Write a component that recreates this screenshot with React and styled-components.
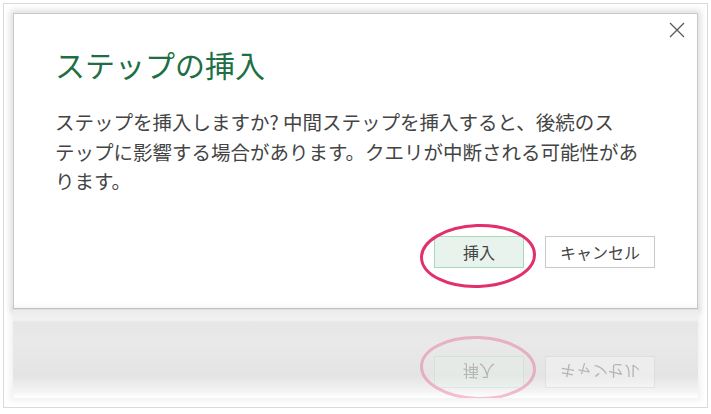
import React from "react";
import styled, { createGlobalStyle } from "styled-components";

const GlobalStyle = createGlobalStyle`
  html, body {
    margin: 0;
    padding: 0;
    background: #ffffff;
  }
  body {
    font-family: "Noto Sans CJK JP", "Noto Sans", sans-serif;
  }
`;

const Frame = styled.div`
  box-sizing: border-box;
  width: 705px;
  height: 405px;
  margin: 3px;
  padding: 9px;
  border: 1px solid #dadada;
  display: flex;
  flex-direction: column;
`;

const Dialog = styled.section`
  box-sizing: border-box;
  width: 685px;
  height: 297px;
  background: #ffffff;
  border: 1px solid #c9c9c9;
  box-shadow: 0 0 6px 3px rgba(0, 0, 0, 0.12);
  display: flex;
  flex-direction: column;
`;

const Header = styled.div`
  display: flex;
  justify-content: flex-end;
  align-items: flex-start;
  height: 30px;
  padding: 8px 12px 0 0;
  box-sizing: border-box;
`;

const CloseButton = styled.button`
  width: 16px;
  height: 16px;
  padding: 0;
  border: 0;
  background: transparent;
  display: flex;
  cursor: pointer;
`;

const Content = styled.div`
  padding: 0 42px 0 41px;
  display: flex;
  flex-direction: column;
`;

const Title = styled.h1`
  margin: 0;
  font-size: 30px;
  line-height: 40px;
  font-weight: 400;
  color: #1e6f43;
`;

const Message = styled.p`
  margin: 23px 0 0;
  font-size: 19.5px;
  line-height: 29.5px;
  color: #444444;
`;

const Footer = styled.div`
  display: flex;
  justify-content: flex-end;
  gap: 21px;
  margin-top: 40px;
`;

const Button = styled.button`
  box-sizing: border-box;
  height: 32px;
  min-width: 90px;
  padding: 0 14px;
  font-family: "Noto Sans CJK JP", sans-serif;
  font-size: 16px;
  color: #444444;
  background: ${p => (p.$primary ? "#e7f3ec" : "#ffffff")};
  border: 1px solid ${p => (p.$primary ? "#a9d8bd" : "#c8c8c8")};
  cursor: pointer;
`;

const Marked = styled.div`
  position: relative;
  display: flex;
`;

const Ring = styled.svg`
  position: absolute;
  left: -15px;
  top: -14px;
  width: 118px;
  height: 66px;
  pointer-events: none;
  overflow: visible;
`;

const Reflection = styled.div`
  box-sizing: border-box;
  width: 685px;
  height: 88px;
  margin-top: 1px;
  padding: 46px 43px 0 0;
  background: linear-gradient(
    to bottom,
    #ececec 0px,
    #f1f1f1 10px,
    #e6e6e6 12px,
    #e9e9e9 32px,
    #e4e4e4 66px,
    #f2f2f2 80px,
    #ffffff 88px
  );
  box-shadow: 0 0 6px 3px rgba(0, 0, 0, 0.06);
  overflow: hidden;
`;

const Mirror = styled.div`
  transform: scaleY(-1);
  opacity: 0.3;
`;

const MirrorRow = styled(Footer)`
  margin-top: 0;
`;

const CloseIcon = () => (
  <svg width="16" height="16" viewBox="0 0 16 16">
    <path d="M1 1 L15 15 M15 1 L1 15" stroke="#5a5a5a" strokeWidth="1.3" fill="none" />
  </svg>
);

const Actions = () => (
  <>
    <Marked>
      <Button $primary>挿入</Button>
      <Ring viewBox="0 0 118 66">
        <ellipse
          cx="59"
          cy="34"
          rx="56.5"
          ry="30.5"
          fill="none"
          stroke="#e2306c"
          strokeWidth="3"
          transform="rotate(-2 59 34)"
        />
      </Ring>
    </Marked>
    <Button>キャンセル</Button>
  </>
);

export default function App() {
  return (
    <>
      <GlobalStyle />
      <Frame>
        <Dialog>
          <Header>
            <CloseButton aria-label="閉じる">
              <CloseIcon />
            </CloseButton>
          </Header>
          <Content>
            <Title>ステップの挿入</Title>
            <Message>
              ステップを挿入しますか? 中間ステップを挿入すると、後続のス
              <br />
              テップに影響する場合があります。クエリが中断される可能性があ
              <br />
              ります。
            </Message>
            <Footer>
              <Actions />
            </Footer>
          </Content>
        </Dialog>
        <Reflection aria-hidden="true">
          <Mirror>
            <MirrorRow>
              <Actions />
            </MirrorRow>
          </Mirror>
        </Reflection>
      </Frame>
    </>
  );
}
